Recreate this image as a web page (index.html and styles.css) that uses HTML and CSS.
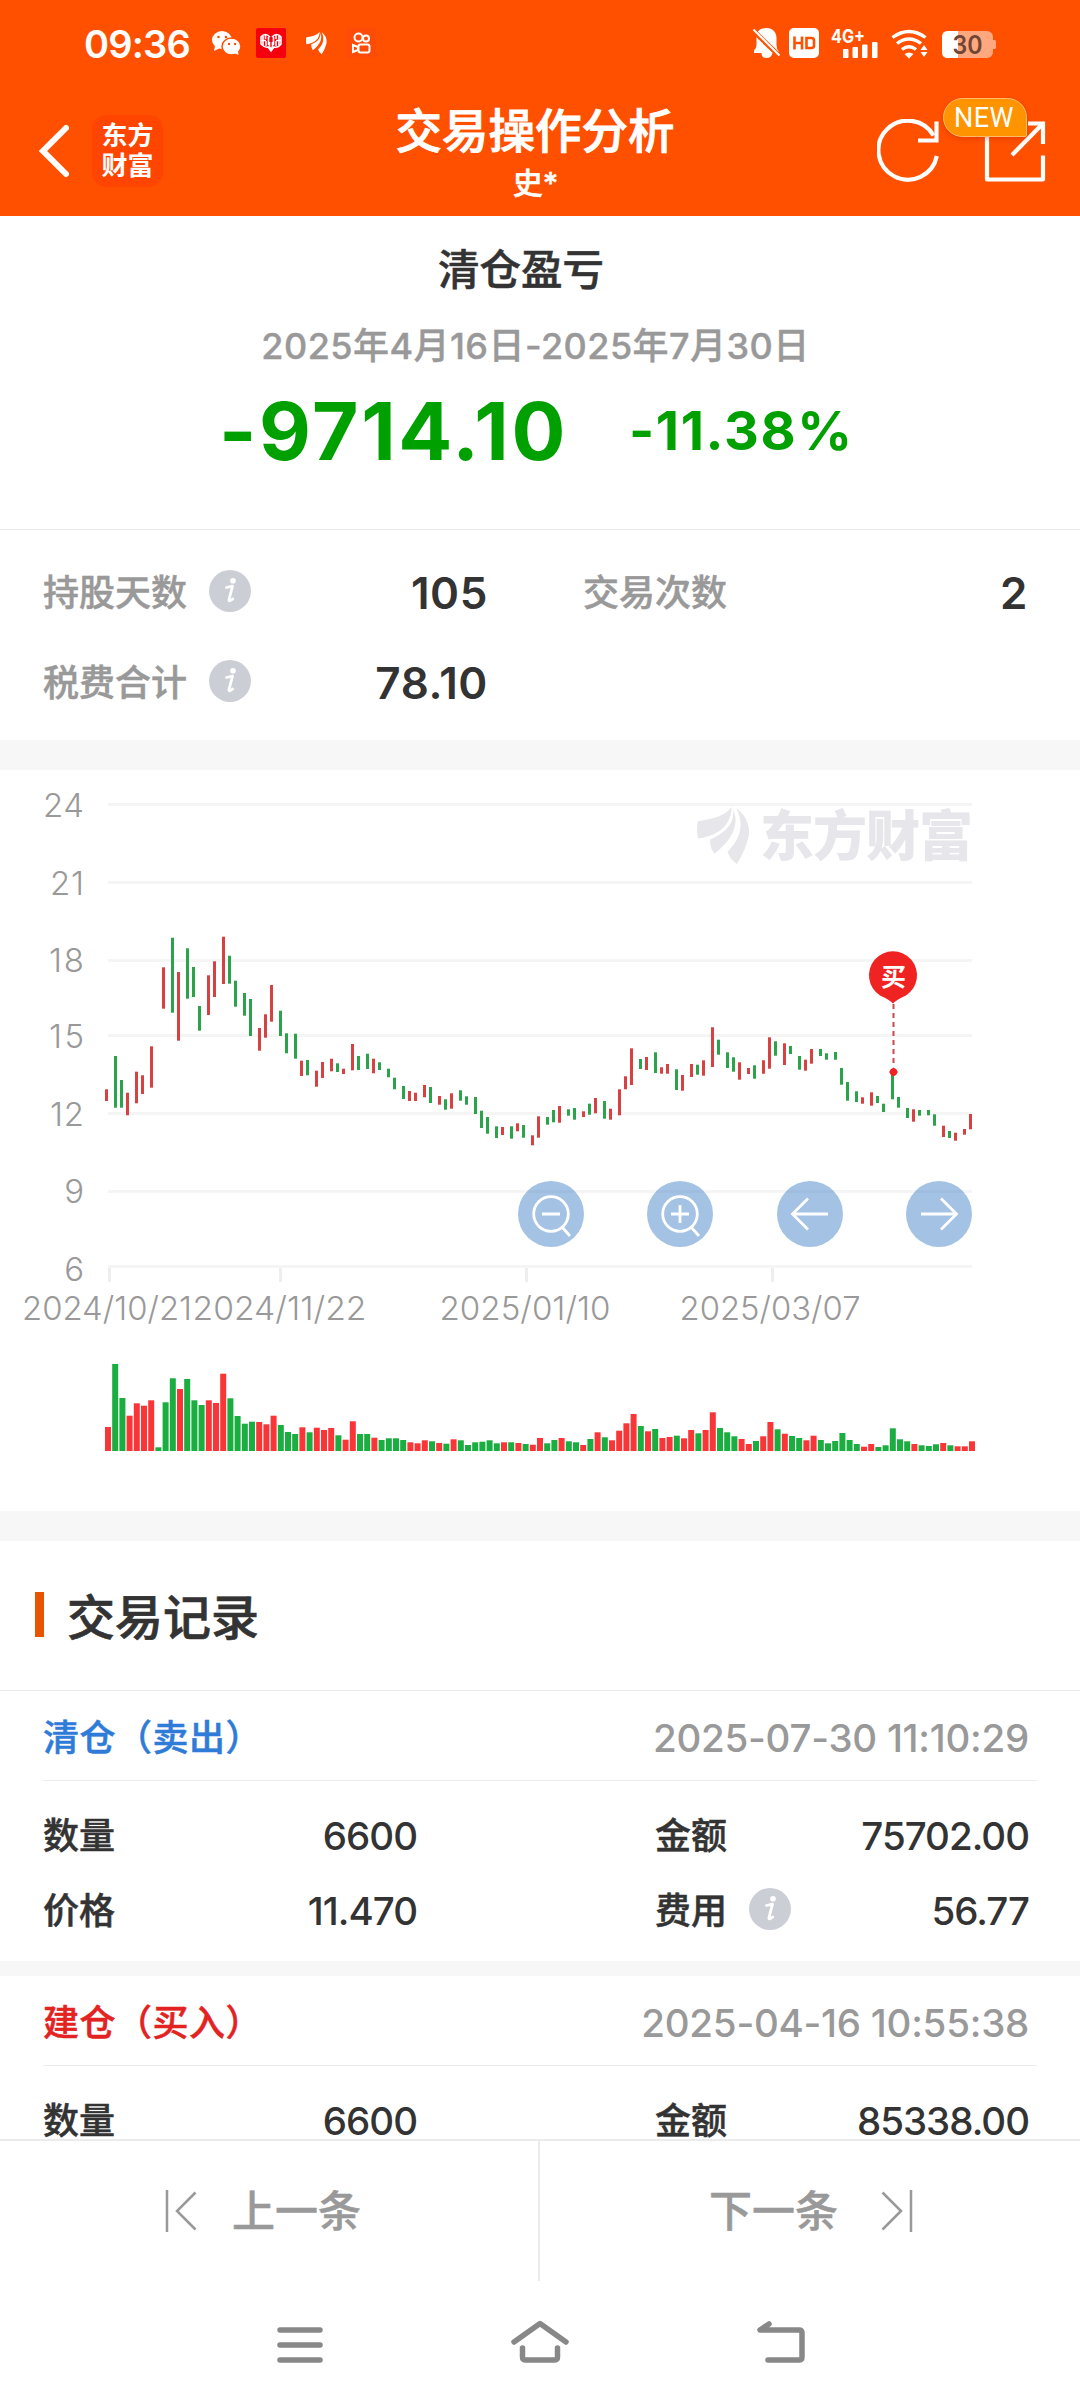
FILE: index.html
```html
<!DOCTYPE html>
<html lang="zh-CN">
<head>
<meta charset="utf-8">
<title>交易操作分析</title>
<link rel="stylesheet" href="styles.css">
</head>
<body>
<svg class="defs" width="0" height="0">
  <symbol id="info" viewBox="0 0 42 42">
    <circle cx="21" cy="21" r="21" fill="#cbcfd5"/>
    <circle cx="24" cy="10.800" r="2.800" fill="#fff"/>
    <path d="M17.500 17.500L23.500 16.200L20 29.500Q19.400 32.400 23.800 29" fill="none" stroke="#fff" stroke-width="2.800" stroke-linejoin="round" stroke-linecap="round"/>
  </symbol>
  <symbol id="leaf" viewBox="0 0 52 56">
    <path d="M34 0C27 10 12 12 1 14Q-1 21 1 31C20 28 33 20 34 0Z"/>
    <path d="M35.500 2C37 14 31 24 13 32Q12 39 17 46C31 35 43 20 35.500 2Z"/>
    <path d="M38.500 1C50 10 53 21 50 31Q47 44 39 56Q32 51 30 44C44 30 46 16 38.500 1Z"/>
  </symbol>
</svg>

<header class="header">
  <div class="status">
    <span class="clock">09:36</span>
    <svg class="status-left" width="170" height="34" viewBox="210 25 170 34">
      <g fill="#fff">
        <ellipse cx="222" cy="39" rx="10" ry="9"/>
        <path d="M215 45l-1 5 6-3z"/>
        <ellipse cx="231.500" cy="45.500" rx="9.500" ry="8.500" stroke="#ff5000" stroke-width="1.500"/>
        <path d="M234 52l4.500 2-.500-4z"/>
      </g>
      <g fill="#ff5000"><circle cx="218.500" cy="36" r="1.300"/><circle cx="226" cy="36" r="1.300"/><circle cx="229" cy="43" r="1.200"/><circle cx="235" cy="43" r="1.200"/></g>
      <rect x="256" y="27" width="30" height="30" rx="2" fill="#f5000f"/>
      <g fill="none" stroke="#fff" stroke-width="1.600">
        <path d="M270 36Q265 31 261 36V43Q265 47 268 46L271 50L274 46Q278 47 281 43V36Q277 31 272 36"/>
        <path d="M263 35v9M265.500 34v4M266 40v5M268.500 36v8M273.500 36v8M276 34v4M276 40v5M279 35v9M261 39.500h5M276 39.500h5M269.500 41v5l1.500 2 1.500-2v-5"/>
      </g>
      <use href="#leaf" x="306" y="30" width="21" height="24" fill="#fff"/>
      <rect x="346" y="27" width="30" height="30" rx="4" fill="#ff4b08"/>
      <g fill="none" stroke="#fff" stroke-width="2"><circle cx="358.500" cy="36.500" r="4"/><circle cx="366" cy="37.500" r="3"/><rect x="358.500" y="43.500" width="11" height="8" rx="2"/><path d="M353 44v7l5-2v-3z"/></g>
    </svg>
    <svg class="status-right" width="246" height="34" viewBox="751 25 246 34">
      <path fill="#fff" d="M766.500 27c6.500 0 10 4.500 10 10v7q0 4 2 6v2h-6q-1 5-6 5t-5-5h-7.500v-2.500q2.500-2 2.500-5.500v-8q0-7 6-8.500z"/>
      <path d="M752.500 29L780 55.500" stroke="#ff5000" stroke-width="5"/><path d="M753.500 28.500L779.500 54.500" stroke="#fff" stroke-width="2"/>
      <rect x="789" y="27" width="30" height="30" rx="5" fill="#fff"/>
      <path d="M794.500 35.500v13M802 35.500v13M794.500 42h7.500M806.500 37v10h5q2.500 0 2.500-2.500v-5q0-2.500-2.500-2.500z" fill="none" stroke="#ff5000" stroke-width="2.600"/>
      <text x="831" y="41.500" class="net" textLength="34" lengthAdjust="spacingAndGlyphs">4G+</text>
      <g fill="#fff"><rect x="843" y="48" width="5.500" height="9" rx="1"/><rect x="852.500" y="46" width="5.500" height="11" rx="1"/><rect x="862" y="43.500" width="5.500" height="13.500" rx="1"/><rect x="872" y="41" width="5.500" height="16" rx="1"/></g>
      <g fill="none" stroke="#fff" stroke-width="3.400"><path d="M892.500 36.500q16.500-12 33 0"/><path d="M897 42.500q12-9 24 0"/><path d="M902 48.500q7-5.500 14 0"/></g>
      <path fill="#fff" d="M904.500 53q4.500-3 9 0l-4.500 4.500zM920.500 49l3.500-5 3.500 5zM920.500 51l3.500 5 3.500-5z"/>
      <rect x="942" y="30" width="51" height="27" rx="6" fill="#ffa880"/>
      <path d="M948 30h10v27h-10q-6 0-6-6v-15q0-6 6-6z" fill="#fff"/><rect x="992" y="39" width="4" height="9" rx="1.500" fill="#ffa880"/>
      <text x="952.500" y="53" class="batt" textLength="30" lengthAdjust="spacingAndGlyphs">30</text>
    </svg>
  </div>
  <div class="appbar">
    <div class="bar-left">
      <svg width="30" height="54" viewBox="0 0 30 54"><path d="M27 4L4 27L27 50" fill="none" stroke="#fff" stroke-width="6" stroke-linecap="round"/></svg>
      <div class="brand">东方<br>财富</div>
    </div>
    <div class="title"><h1>交易操作分析</h1><p>史*</p></div>
    <div class="bar-right">
      <svg width="64" height="64" viewBox="877 118 64 64" fill="none" stroke="#fff" stroke-width="4.200"><path d="M936.800 155A29.500 29.500 0 1 1 933.500 134.500"/><path d="M936.500 120.500V139.500H918"/></svg>
      <div class="share">
        <svg width="62" height="62" viewBox="984 119 62 62" fill="none" stroke="#fff" stroke-width="4.200"><path d="M1010 122.500H987V178.500H1043V154.500" stroke-linejoin="round"/><path d="M1028 122.500H1043V143M1043 122.500L1012 154"/></svg>
        <span class="new">NEW</span>
      </div>
    </div>
  </div>
</header>

<main class="content">
  <section class="summary">
    <h2>清仓盈亏</h2>
    <p class="period">2025年4月16日-2025年7月30日</p>
    <div class="profit"><b class="amount">-9714.10</b><b class="rate">-11.38%</b></div>
  </section>
  <section class="stats">
    <div class="stat"><span>持股天数</span><svg class="info"><use href="#info"/></svg><b>105</b></div>
    <div class="stat"><span>交易次数</span><b>2</b></div>
    <div class="stat"><span>税费合计</span><svg class="info"><use href="#info"/></svg><b>78.10</b></div>
  </section>
  <div class="gap"></div>
  <section class="chart">
    <svg width="1080" height="741" viewBox="0 770 1080 741">
      <g class="grid"><path d="M108 804.500H972M108 882.500H972M108 960.500H972M108 1035.500H972M108 1113.500H972M108 1191.500H972M108 1266.500H972"/></g>
      <g class="ticks"><path d="M109.500 1268V1282M280.500 1268V1282M526.500 1268V1282M772.500 1268V1282"/></g>
      <g fill="#e6e6eb"><use href="#leaf" x="697" y="807" width="53" height="57"/><text class="mark" x="760" y="856" textLength="213">东方财富</text></g>
      <g class="axis" text-anchor="end">
        <text x="84" y="817" textLength="41">24</text><text x="84" y="894.500" textLength="34">21</text><text x="84" y="972" textLength="35">18</text><text x="84" y="1047.500" textLength="35">15</text><text x="84" y="1125.500" textLength="34">12</text><text x="84" y="1203">9</text><text x="84" y="1281">6</text>
      </g>
      <g class="axis">
        <text x="22" y="1320" textLength="170" lengthAdjust="spacingAndGlyphs">2024/10/21</text><text x="192.500" y="1320" textLength="174" lengthAdjust="spacingAndGlyphs">2024/11/22</text><text x="439.500" y="1320" textLength="171" lengthAdjust="spacingAndGlyphs">2025/01/10</text><text x="679.500" y="1320" textLength="181" lengthAdjust="spacingAndGlyphs">2025/03/07</text>
      </g>
      <g id="candles"></g>
      <g id="volume"></g>
      <path d="M893.500 1004V1066" stroke="#c94a4a" stroke-width="2" stroke-dasharray="5 4"/>
      <path d="M893.500 1067.500l4.500 4.500-4.500 4.500-4.500-4.500z" fill="#f02323"/><circle cx="893.500" cy="1072" r="3.700" fill="#f02323"/>
      <path d="M893 1003.500Q889 999.500 880 995.500A24 24 0 1 1 906 995.500Q897 999.500 893 1003.500Z" fill="#f02323"/>
      <text class="pin" x="893.500" y="985.500" text-anchor="middle">买</text>
      <g fill="rgb(73,133,201)" fill-opacity=".5"><circle cx="551" cy="1214" r="33"/><circle cx="680" cy="1214" r="33"/><circle cx="810" cy="1214" r="33"/><circle cx="939" cy="1214" r="33"/></g>
      <g fill="none" stroke="#fff" stroke-width="2.800">
        <circle cx="551" cy="1214" r="17.300"/><path d="M542 1214h18M562 1227l8 9"/>
        <circle cx="680" cy="1214" r="17.300"/><path d="M671 1214h18M680 1205v18M691 1227l8 9"/>
        <path d="M828 1214h-35M808 1198.500l-15.500 15.500 15.500 15.500M921 1214h35M941 1198.500l15.500 15.500-15.500 15.500"/>
      </g>
    </svg>
  </section>
  <div class="gap"></div>
  <section class="records">
    <h2 class="section-title">交易记录</h2>
    <article class="record">
      <div class="rec-head"><span class="sell">清仓（卖出）</span><time>2025-07-30 11:10:29</time></div>
      <div class="rec-body">
        <div class="cell"><span>数量</span><b>6600</b></div>
        <div class="cell"><span>金额</span><b>75702.00</b></div>
        <div class="cell"><span>价格</span><b>11.470</b></div>
        <div class="cell"><span>费用</span><svg class="info"><use href="#info"/></svg><b>56.77</b></div>
      </div>
    </article>
    <article class="record">
      <div class="rec-head"><span class="buy">建仓（买入）</span><time>2025-04-16 10:55:38</time></div>
      <div class="rec-body">
        <div class="cell"><span>数量</span><b>6600</b></div>
        <div class="cell"><span>金额</span><b>85338.00</b></div>
      </div>
    </article>
  </section>
</main>

<footer class="pager">
  <div class="page prev"><svg width="32" height="44" viewBox="0 0 32 44"><path d="M2 1V43M30.500 3.500L12 22L30.500 40.500"/></svg><span>上一条</span></div>
  <div class="page next"><span>下一条</span><svg width="32" height="44" viewBox="0 0 32 44"><path d="M30 1V43M1.500 3.500L20 22L1.500 40.500"/></svg></div>
</footer>
<nav class="sysnav">
  <svg width="1080" height="60" viewBox="0 2312 1080 60" fill="none" stroke="#888" stroke-width="5.500" stroke-linecap="round" stroke-linejoin="round">
    <path d="M280 2330H320M280 2345H320M280 2360H320"/>
    <path d="M514 2342L540 2323.500L566 2342M522.500 2348V2357Q522.500 2360 526 2360H554Q557.500 2360 557.500 2357V2348"/>
    <path d="M769 2324L760 2330H799Q802 2330 802 2333V2357Q802 2360 799 2360H768"/>
  </svg>
</nav>
<script src="chart.js"></script>
</body>
</html>
```
FILE: styles.css
```css
* { box-sizing: border-box; margin: 0; padding: 0; }
body {
  width: 1080px; height: 2408px; overflow: hidden;
  display: flex; flex-direction: column;
  background: #fff; color: #333;
  font-family: Inter, "Noto Sans CJK SC", sans-serif;
}
svg { display: block; flex: none; }
.defs { position: absolute; }

.header { height: 216px; flex: none; background: #ff5000; color: #fff; }
.status { height: 86px; display: flex; align-items: center; padding: 0 83px 0 84px; }
.clock { width: 126px; font-size: 38px; font-weight: 600; line-height: 46px; letter-spacing: -.8px; padding-top: 2px; }
.status-right { margin-left: auto; }
.net { font: 700 19px Inter, sans-serif; fill: #fff; }
.batt { font: 600 25px Inter, sans-serif; fill: #6f4634; }
.appbar { height: 130px; display: grid; grid-template-columns: 200px 1fr 200px; padding: 0 34px 0 39px; align-items: center; }
.bar-left { display: flex; align-items: center; gap: 23px; }
.brand { width: 71px; height: 72px; border-radius: 14px; background: #ff4500; font: 700 26px/30px "Noto Sans CJK SC", sans-serif; text-align: center; padding-top: 4px; }
.title { text-align: center; height: 130px; padding: 14px 15px 0 0; }
.title h1 { font-size: 46.500px; line-height: 62px; font-weight: 500; white-space: nowrap; -webkit-text-stroke: .9px currentColor; }
.title p { font-size: 30px; line-height: 40px; font-weight: 500; margin-top: 1px; padding-left: 1px; -webkit-text-stroke: .5px currentColor; }
.bar-right { display: flex; justify-content: flex-end; gap: 43px; align-items: center; }
.share { position: relative; }
.new { position: absolute; left: -41px; top: -22px; width: 84px; height: 39px; border: 1px solid #ffbb68; border-radius: 20px 20px 2px 20px; background: #ff9400; box-shadow: 0 2px 5px rgba(180, 30, 0, .3); font: 400 27px/38px Roboto, sans-serif; text-align: center; letter-spacing: .4px; padding-right: 2px; }

.content { flex: 1; min-height: 0; overflow: hidden; }
.summary { height: 314px; border-bottom: 1px solid #ebebeb; padding-top: 24px; text-align: center; }
.summary h2 { font-size: 41.500px; line-height: 60px; font-weight: 500; padding-right: 38px; -webkit-text-stroke: .6px currentColor; }
.period { font-size: 36px; line-height: 48px; font-weight: 500; color: #999; margin-top: 22px; padding-right: 9px; letter-spacing: .45px; -webkit-text-stroke: .4px currentColor; }
.profit { display: flex; align-items: center; height: 80px; margin-top: 20px; padding-left: 219px; color: #00a000; }
.amount { width: 410px; text-align: left; font-size: 80px; font-weight: 700; letter-spacing: 2.600px; }
.rate { font-size: 54px; font-weight: 700; letter-spacing: 1.600px; }

.stats { height: 210px; padding: 18px 53px 12px 43px; display: grid; grid-template-columns: 444px 444px; grid-auto-rows: 90px; column-gap: 96px; }
.stat { display: flex; align-items: center; color: #999; font-size: 36px; line-height: 46px; font-weight: 500; }
.stat span, .cell span, .rec-head span, .page span { -webkit-text-stroke: .5px currentColor; }
.stat b { margin-left: auto; color: #333; font-size: 44px; font-weight: 600; letter-spacing: .6px; margin-right: -1px; }
.info { width: 42px; height: 42px; margin: -4px 0 0 22px; }
.gap { height: 30px; background: #f7f7f7; }

.chart { height: 741px; }
.grid path { stroke: #f5f5f5; stroke-width: 3; }
.ticks path { stroke: #eee; stroke-width: 3; }
.axis { font: 350 33px Inter, sans-serif; fill: #999; }
.mark { font: 900 54px "Noto Sans CJK SC", sans-serif; }
.pin { font: 700 25px "Noto Sans CJK SC", sans-serif; fill: #fff; }
.up { stroke: #d84141; }
.down { stroke: #2ba34b; }
.vol-up { fill: #fa3538; }
.vol-down { fill: #1aad3f; }

.section-title { height: 150px; border-bottom: 1px solid #ebebeb; padding: 4px 0 0 35px; display: flex; align-items: center; gap: 23px; font-size: 48px; line-height: 60px; font-weight: 500; -webkit-text-stroke: .7px currentColor; }
.section-title::before { content: ""; width: 9px; height: 45px; background: #e85400; margin-top: -6px; }
.record { height: 285px; border-bottom: 15px solid #f7f7f7; }
.rec-head { height: 90px; margin: 0 43px; display: flex; align-items: center; justify-content: space-between; border-bottom: 1px solid #ebebeb; font-size: 36px; line-height: 46px; font-weight: 500; padding: 5px 8px 0 0; }
.rec-head span { letter-spacing: .5px; }
.sell { color: #2f7bd8; }
.buy { color: #e32222; }
.rec-head time { font-size: 38.500px; letter-spacing: -.25px; color: #999; }
.rec-body { padding: 17px 51px 0 43px; display: grid; grid-template-columns: 374px 374px; grid-auto-rows: 75px; column-gap: 238px; }
.cell { display: flex; align-items: center; font-size: 36px; line-height: 46px; font-weight: 500; }
.cell b { margin-left: auto; font-size: 38.500px; font-weight: 550; letter-spacing: -1px; }

.pager { height: 142px; flex: none; border-top: 2px solid #ebebeb; display: grid; grid-template-columns: 1fr 1fr; background: #fff; }
.page { display: flex; align-items: center; color: #999; font-size: 43px; line-height: 56px; font-weight: 500; }
.page path { fill: none; stroke: #999; stroke-width: 2.500; }
.prev { padding-left: 165px; gap: 35px; border-right: 2px solid #ebebeb; }
.next { padding-left: 169px; gap: 43px; }
.sysnav { height: 127px; flex: none; padding-top: 31px; }
```
FILE: chart.js
```js
const NS = "http://www.w3.org/2000/svg";

// Daily ranges on a 1/3 px grid: [x, high, low, direction]; each run starts at its own origin.
const runs = [
  [80, 920, "79 508 543 R,106 408 563 G,124 480 563 G,142 518 586 R,169 455 550 R,187 466 522 R,214 379 503 R,250 142 266 R,277 53 278 G,295 156 362 R,322 85 236 G,340 141 231 G,358 258 332 G,385 166 285 R,403 124 231 R,430 50 192 R,448 107 191 G,466 182 260 G,493 219 287 G,511 237 348 G,538 324 392 R,556 283 353 R,574 195 305 R,601 272 348 G,619 340 400 G,646 341 416 G,664 422 468 R,682 420 466 G,709 452 500 R,727 426 474 R,754 416 454 R,772 430 456 G,790 446 462 R,817 372 451 R,835 408 450 G,862 401 447 G,880 416 460 R,898 427 450 G,925 446 472 G,943 473 508 G,970 498 537 G"],
  [400, 980, "28 333 363 R,46 338 363 R,73 315 352 R,91 321 369 G,118 348 374 R,136 358 389 G,154 340 386 R,181 331 362 G,199 349 374 G,226 351 402 G,244 392 444 G,262 411 461 G,289 439 474 G,307 441 465 R,334 439 476 G,352 430 454 R,370 435 473 G,397 466 496 R,415 409 473 R,442 411 434 G,460 390 427 G,478 378 428 R,505 388 407 G,523 384 419 G,550 394 411 R,568 371 404 G,586 354 400 R,613 363 416 G,631 386 419 R,658 328 406 R,676 289 328 R,694 205 315 R,721 237 267 G,739 231 270 R,766 217 279 G,784 262 281 R,802 252 281 R,829 268 330 G,847 285 332 R,874 252 291 R,892 254 284 G,910 241 287 R"],
  [700, 780, "37 742 861 R,55 779 824 G,82 817 864 G,100 832 875 G,118 847 899 R,145 864 882 R,163 856 896 G,190 841 881 R,208 772 866 R,226 784 827 G,253 790 855 R,271 798 822 G,298 828 869 G,316 839 872 R,334 807 851 R,361 807 828 G,379 820 839 G,406 816 839 G,424 864 914 G,442 906 962 G,469 934 966 G,487 952 971 R,514 937 977 R,532 948 969 G,550 971 996 G,577 880 958 G,595 951 983 G,622 984 1014 G,640 988 1025 R,658 990 1007 G,685 990 1006 G,703 1003 1037 G,730 1037 1071 R,748 1053 1074 G,766 1058 1082 R,793 1047 1064 R,811 1002 1048 R"]
];
const candles = document.getElementById("candles");
for (const [ox, oy, list] of runs) {
  for (const row of list.split(",")) {
    const [x, top, bottom, dir] = row.split(" ");
    const p = document.createElementNS(NS, "path");
    p.setAttribute("d", `M${Math.floor(ox + x / 3) + 0.5} ${(oy + top / 3).toFixed(1)}V${(oy + bottom / 3).toFixed(1)}`);
    p.setAttribute("class", dir === "R" ? "up" : "down");
    p.setAttribute("stroke-width", "3");
    candles.append(p);
  }
}

// Volume bar tops, 1/3 px, with 303 as the baseline.
const volumes = "231R 42G 144G 197R 160R 167R 151R 292G 157G 85G 117R 87G 151G 165G 151R 159R 71R 145G 198G 221G 215G 216R 223R 197R 225G 246G 252G 232R 247G 233R 240R 234R 256G 269R 214R 252G 252G 263R 270G 265G 265G 270G 277R 280R 271R 274G 279R 281G 268R 271G 285G 277G 275G 271G 280G 277R 277G 279R 282G 284R 264R 280G 270G 264R 274G 277G 285R 267G 247R 262G 271R 242R 220R 192R 228G 244R 237G 264R 261R 257G 265R 240R 250G 240R 187R 234G 247G 259G 267R 282R 273G 259R 216R 238G 251R 258G 264G 271R 257R 270G 280G 273G 249G 270G 282G 290R 282R 291G 286G 235G 268G 274G 282R 286G 288G 283G 279R 286G 289R 289R 274R".split(" ");
const volume = document.getElementById("volume");
volumes.forEach((v, i) => {
  const h = (303 - parseInt(v, 10)) / 3;
  const r = document.createElementNS(NS, "rect");
  r.setAttribute("x", (105 + i * 7.2).toFixed(1));
  r.setAttribute("y", (1451 - h).toFixed(1));
  r.setAttribute("width", "6");
  r.setAttribute("height", h.toFixed(1));
  r.setAttribute("class", v.endsWith("R") ? "vol-up" : "vol-down");
  volume.append(r);
});
```
